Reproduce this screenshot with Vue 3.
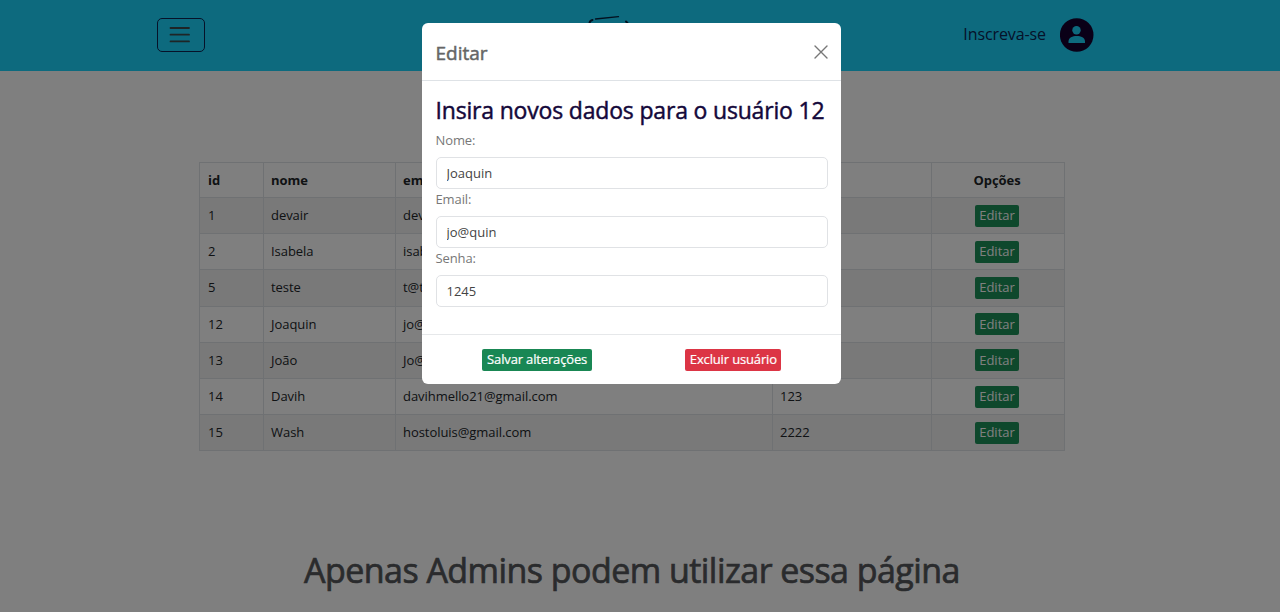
<script setup>
const users = [
  { id: 1, nome: 'devair', email: 'devair@', senha: '123' },
  { id: 2, nome: 'Isabela', email: 'isab@', senha: '123' },
  { id: 5, nome: 'teste', email: 't@t', senha: '123' },
  { id: 12, nome: 'Joaquin', email: 'jo@quin', senha: '1245' },
  { id: 13, nome: 'João', email: 'Jo@o', senha: '1234' },
  { id: 14, nome: 'Davih', email: 'davihmello21@gmail.com', senha: '123' },
  { id: 15, nome: 'Wash', email: 'hostoluis@gmail.com', senha: '2222' },
]
const fields = [
  { label: 'Nome:', value: 'Joaquin' },
  { label: 'Email:', value: 'jo@quin' },
  { label: 'Senha:', value: '1245' },
]
</script>

<template>
  <div class="page">
    <header class="navbar">
      <button class="toggler" aria-label="Menu">
        <svg width="22" height="18" viewBox="0 0 22 18" fill="none" stroke="#3c4a4c" stroke-width="1.8" stroke-linecap="round">
          <path d="M1.5 2h18.500M1.500 8.700h18.500M1.500 15.400h18.500" />
        </svg>
      </button>
      <svg class="brand" width="46" height="40" viewBox="0 0 46 40" fill="none" stroke="#05203f" stroke-width="1.300" stroke-linecap="round">
        <path d="M8.500 4 31.500 1.700" />
        <path d="M2.500 8Q3 5.500 5.500 5" stroke-width="2" />
        <path d="M39 6.500 40.500 8" stroke-width="2" />
      </svg>
      <div class="account">
        <span class="signup">Inscreva-se</span>
        <svg width="34" height="34" viewBox="0 0 34 34">
          <circle cx="16.700" cy="17" r="16.800" fill="#14002e" />
          <circle cx="16.500" cy="12.200" r="4.200" fill="#1ad5fd" />
          <path d="M8.500 25v-1.500c0-3.800 4-5.500 8.200-5.500s8.300 1.700 8.300 5.500V25z" fill="#1ad5fd" />
        </svg>
      </div>
    </header>

    <main>
      <table>
        <colgroup>
          <col class="c-id" /><col class="c-nome" /><col class="c-email" /><col class="c-senha" /><col class="c-op" />
        </colgroup>
        <thead>
          <tr><th>id</th><th>nome</th><th>email</th><th>senha</th><th class="center">Opções</th></tr>
        </thead>
        <tbody>
          <tr v-for="u in users" :key="u.id">
            <td>{{ u.id }}</td>
            <td>{{ u.nome }}</td>
            <td>{{ u.email }}</td>
            <td>{{ u.senha }}</td>
            <td class="center"><button class="btn edit">Editar</button></td>
          </tr>
        </tbody>
      </table>
      <h1>Apenas Admins podem utilizar essa página</h1>
    </main>

    <div class="backdrop">
      <section class="modal" role="dialog">
        <div class="modal-header">
          <h5>Editar</h5>
          <svg width="14" height="14" viewBox="0 0 14 14" fill="none" stroke="#777" stroke-width="1.400" stroke-linecap="round">
            <path d="M1 1l12 12M13 1 1 13" />
          </svg>
        </div>
        <div class="modal-body">
          <h4>Insira novos dados para o usuário 12</h4>
          <div v-for="f in fields" :key="f.label" class="field">
            <label>{{ f.label }}</label>
            <input type="text" :value="f.value" />
          </div>
        </div>
        <div class="modal-footer">
          <button class="btn save">Salvar alterações</button>
          <button class="btn delete">Excluir usuário</button>
        </div>
      </section>
    </div>
  </div>
</template>

<style>
body { overflow: hidden; background: #fff; }
</style>

<style scoped>
* { box-sizing: border-box; }
.page {
  position: relative;
  height: 612px;
  overflow: hidden;
  background: #fff;
  color: #212529;
  font-family: "Open Sans", "Noto Sans", sans-serif;
  font-size: 13px;
}
.navbar {
  display: flex;
  justify-content: space-between;
  height: 70.500px;
  padding: 0 186px 0 157px;
  background: #1ad5fd;
}
.toggler {
  display: flex;
  align-items: center;
  justify-content: center;
  width: 47.500px;
  height: 34px;
  margin-top: 18px;
  padding: 0;
  border: 1px solid #0c2552;
  border-radius: 5px;
  background: none;
}
.toggler svg { margin-right: 1px; }
.brand { position: absolute; left: 587px; top: 15px; }
.account { display: flex; align-items: center; gap: 14px; }
.signup { font-size: 16px; color: #0c2552; letter-spacing: -0.1px; margin-top: -2px; }
main { padding-top: 91.500px; }
table {
  width: 866px;
  margin-left: 199px;
  border-collapse: collapse;
  table-layout: fixed;
}
.c-id { width: 64px; }
.c-nome { width: 132px; }
.c-email { width: 377px; }
.c-senha { width: 159px; }
.c-op { width: 133px; }
th, td {
  height: 36.200px;
  padding: 0 7px 1px;
  border: 1px solid #dee2e6;
  text-align: left;
  line-height: 18px;
  letter-spacing: -0.05px;
}
th { height: 35px; padding-bottom: 0; font-weight: 700; }
th:first-child, td:first-child { padding-left: 8px; }
tbody tr:nth-child(odd) { background: #f2f2f2; }
th.center, td.center { padding: 0 8px 0 6px; text-align: center; }
.btn {
  display: inline-block;
  height: 22px;
  padding: 0;
  border: 0;
  border-radius: 2px;
  background: #198754;
  color: #fff;
  font: 13px/21px "Open Sans", "Noto Sans", sans-serif;
  white-space: nowrap;
  text-align: center;
}
.edit { width: 44.500px; background: #1c9058; vertical-align: middle; }
h1 {
  margin: 95px 0 0;
  width: 1264px;
  text-align: center;
  font-size: 34px;
  line-height: 49px;
  font-weight: 400;
  letter-spacing: -0.550px;
  -webkit-text-stroke: 0.700px #55575a;
  color: #55575a;
}
.backdrop {
  position: absolute;
  inset: 0;
  background: rgba(0, 0, 0, 0.5);
}
.modal {
  width: 419.500px;
  height: 361px;
  margin: 23px 0 0 421.500px;
  border-radius: 6px;
  background: #fff;
}
.modal-header {
  display: flex;
  align-items: center;
  justify-content: space-between;
  height: 58px;
  padding: 0 13px 0 14px;
  border-bottom: 1px solid #dee2e6;
}
h5 {
  margin: 2px 0 0;
  font-size: 19px;
  font-weight: 400;
  color: #666;
  -webkit-text-stroke: 0.500px #666;
}
.modal-body { height: 253px; padding: 12px 13px 0 14px; }
h4 {
  margin: 0;
  height: 34px;
  font-size: 23px;
  line-height: 34px;
  font-weight: 400;
  letter-spacing: -0.180px;
  color: #14083a;
  -webkit-text-stroke: 0.450px #14083a;
  white-space: nowrap;
}
.field { height: 59.200px; }
label { display: block; height: 29.500px; line-height: 26px; color: #777; letter-spacing: -0.1px; }
input {
  display: block;
  width: 392.500px;
  height: 32px;
  padding: 0 10px;
  border: 1px solid #e0e2e5;
  border-radius: 5px;
  background: #fff;
  color: #444;
  font: 13px "Open Sans", "Noto Sans", sans-serif;
}
.modal-footer {
  display: flex;
  justify-content: space-around;
  height: 50px;
  padding: 13.500px 13px 0 14px;
  border-top: 1px solid #e6e8ea;
}
.save, .delete { letter-spacing: -0.150px; -webkit-text-stroke: 0.200px #fff; }
.save { width: 110px; }
.delete { width: 96px; background: #dc3545; }
</style>
